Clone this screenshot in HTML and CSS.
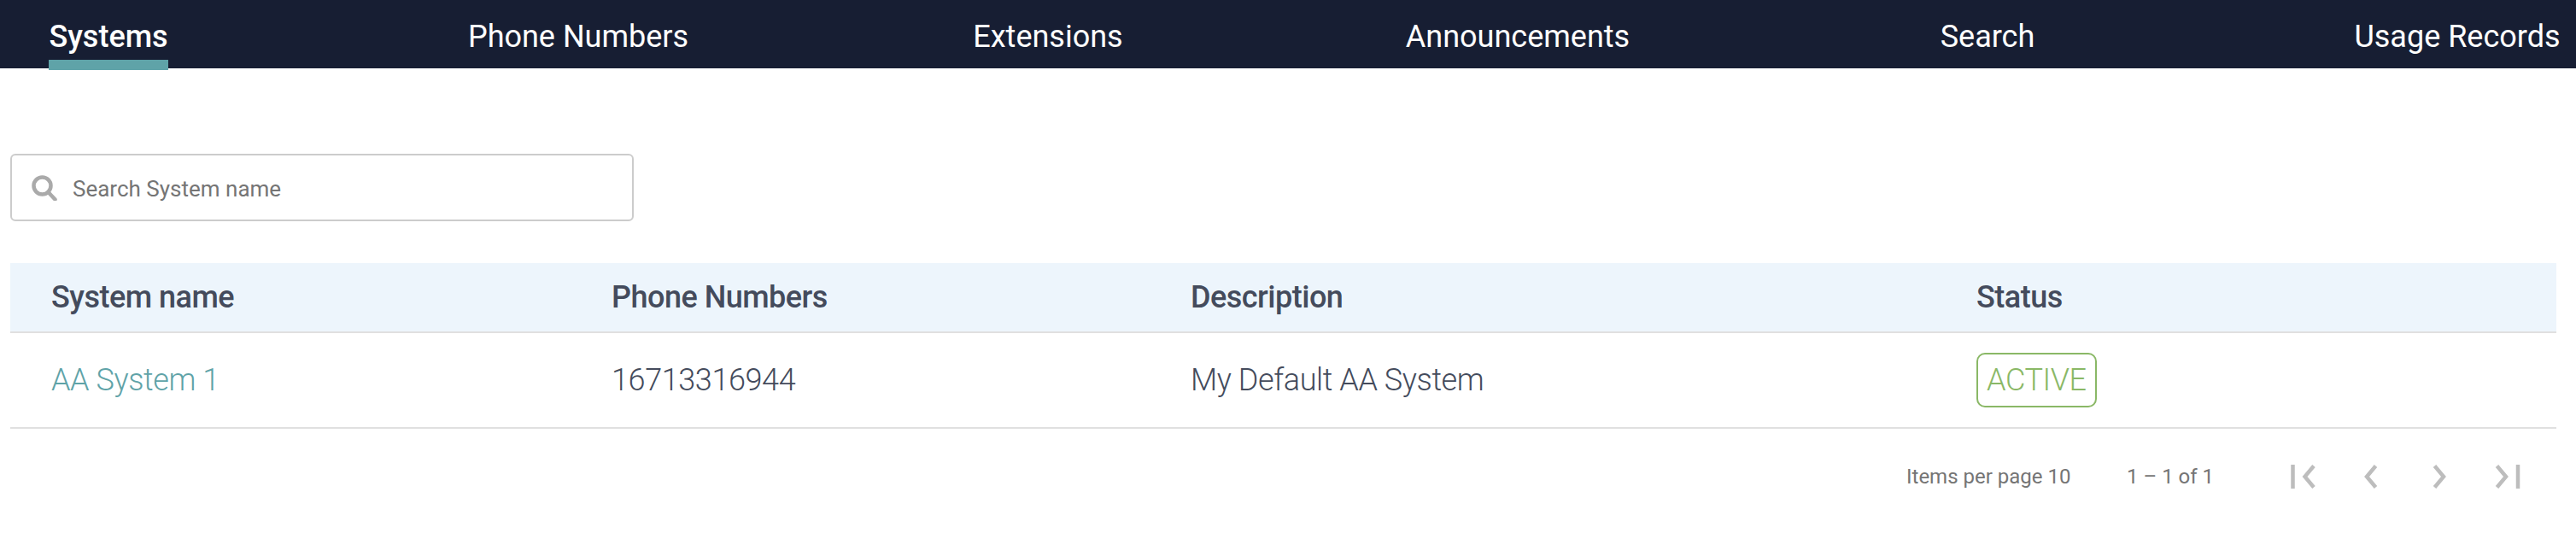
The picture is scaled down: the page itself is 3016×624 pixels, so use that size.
FILE: index.html
```html
<!DOCTYPE html>
<html lang="en">
<head>
    <meta charset="UTF-8">
    <meta name="viewport" content="width=device-width, initial-scale=1.0">
    <title>Systems</title>
    <link rel="stylesheet" href="styles.css">
</head>
<body>
    <nav class="tabs">
        <a class="tab tab-active"><span class="tab-label">Systems</span></a>
        <a class="tab"><span class="tab-label">Phone Numbers</span></a>
        <a class="tab"><span class="tab-label">Extensions</span></a>
        <a class="tab"><span class="tab-label">Announcements</span></a>
        <a class="tab"><span class="tab-label">Search</span></a>
        <a class="tab"><span class="tab-label">Usage Records</span></a>
    </nav>

    <main class="content">
        <div class="search-box">
            <svg class="search-icon" width="30" height="30" viewBox="0 0 30 30" fill="none" stroke="#aaa" stroke-width="4.5">
                <circle cx="12.5" cy="12.5" r="10"/>
                <path d="M19.5 20l8 8.5" stroke-linecap="round"/>
            </svg>
            <span class="search-placeholder">Search System name</span>
        </div>

        <table class="systems">
            <colgroup>
                <col class="col-name">
                <col class="col-phone">
                <col class="col-desc">
                <col>
            </colgroup>
            <thead>
                <tr>
                    <th>System name</th>
                    <th>Phone Numbers</th>
                    <th>Description</th>
                    <th>Status</th>
                </tr>
            </thead>
            <tbody>
                <tr>
                    <td><a class="system-link">AA System 1</a></td>
                    <td>16713316944</td>
                    <td>My Default AA System</td>
                    <td><span class="badge">ACTIVE</span></td>
                </tr>
            </tbody>
        </table>

        <div class="pager">
            <span class="pager-size">Items per page 10</span>
            <span class="pager-range">1 – 1 of 1</span>
            <div class="pager-buttons">
                <svg width="30" height="28" viewBox="0 0 30 28" fill="none" stroke="#bdbdbd" stroke-width="4.5">
                    <path d="M2.5 0v28"/>
                    <path d="M27 1.5L16.5 14 27 26.5"/>
                </svg>
                <svg width="18" height="28" viewBox="0 0 18 28" fill="none" stroke="#bdbdbd" stroke-width="4.5">
                    <path d="M15.5 1.5L5 14l10.5 12.5"/>
                </svg>
                <svg width="18" height="28" viewBox="0 0 18 28" fill="none" stroke="#bdbdbd" stroke-width="4.5">
                    <path d="M2.5 1.5L13 14 2.5 26.5"/>
                </svg>
                <svg width="30" height="28" viewBox="0 0 30 28" fill="none" stroke="#bdbdbd" stroke-width="4.5">
                    <path d="M2.5 1.5L13 14 2.5 26.5"/>
                    <path d="M27 0v28"/>
                </svg>
            </div>
        </div>
    </main>
</body>
</html>
```

FILE: styles.css
```css
html, body {
    overflow-x: hidden;
}

body {
    font-family: 'Roboto', 'Liberation Sans', sans-serif;
    margin: 0;
    padding: 0;
    background-color: #fff;
    color: #444b5c;
}

.tabs {
    display: grid;
    grid-template-columns: repeat(6, 550px);
    justify-content: center;
    height: 80px;
    padding-right: 12px;
    background-color: #171e33;
}

.tab {
    display: flex;
    justify-content: center;
    color: #fff;
    font-size: 36px;
    line-height: 44px;
}

.tab-label {
    height: 82px;
    padding-top: 21px;
    box-sizing: border-box;
}

.tab-active .tab-label {
    font-weight: 500;
    border-bottom: 12px solid #5fa3a8;
}

.content {
    padding: 100px 23px 0 12px;
}

.search-box {
    display: flex;
    align-items: center;
    gap: 18px;
    box-sizing: border-box;
    width: 730px;
    height: 79px;
    padding-left: 23px;
    border: 2px solid #ccc;
    border-radius: 6px;
}

.search-placeholder {
    font-size: 26px;
    color: #757575;
    padding-top: 2px;
}

.systems {
    width: 100%;
    margin-top: 49px;
    border-collapse: collapse;
    table-layout: fixed;
}

.col-name {
    width: 656px;
}

.col-phone {
    width: 678px;
}

.col-desc {
    width: 920px;
}

.systems th, .systems td {
    padding: 0 0 0 48px;
    text-align: left;
    font-size: 36px;
    letter-spacing: -0.4px;
}

.systems th {
    height: 80px;
    background-color: #edf5fc;
    border-bottom: 2px solid #e0e0e0;
    font-weight: 500;
    letter-spacing: -0.5px;
}

.systems td {
    height: 110px;
    border-bottom: 2px solid #e0e0e0;
    font-weight: 300;
}

.system-link {
    color: #5fa3a8;
}

.badge {
    display: inline-block;
    padding: 0 10px;
    line-height: 60px;
    border: 2px solid #8ab866;
    border-radius: 10px;
    color: #8ab866;
}

.pager {
    display: flex;
    align-items: center;
    height: 28px;
    margin-top: 42px;
    padding-left: 2220px;
    font-size: 24px;
    color: #757575;
}

.pager-size {
    width: 258px;
}

.pager-range {
    width: 192px;
}

.pager-buttons {
    display: flex;
    gap: 54px;
}

.pager-buttons svg:nth-child(2) {
    margin-right: 10px;
}

.pager-buttons svg:nth-child(3) {
    margin-right: 1px;
}
```
